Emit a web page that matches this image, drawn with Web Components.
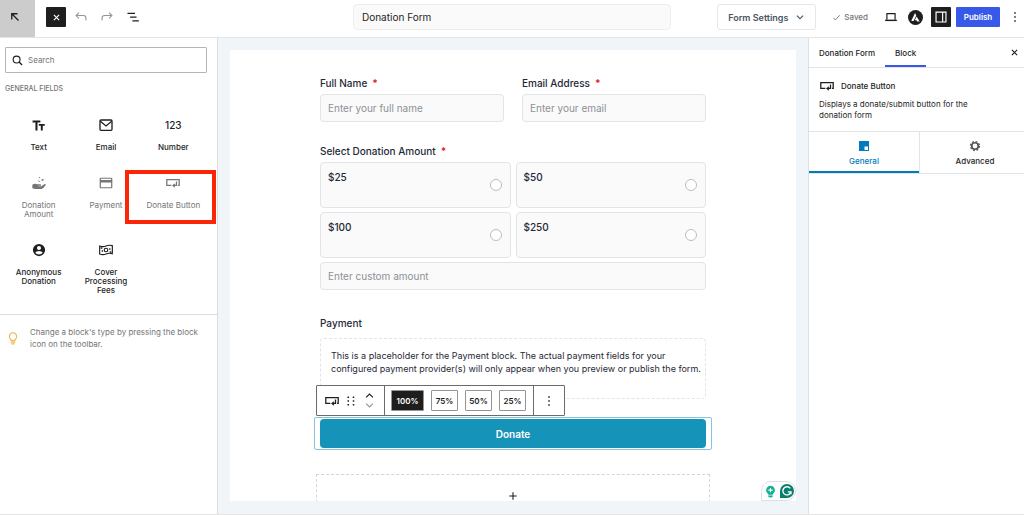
<!DOCTYPE html>
<html lang="en">
<head>
<meta charset="utf-8">
<meta name="viewport" content="width=device-width, initial-scale=1">
<title>Donation Form</title>
<style>
html, body { margin: 0; height: 100%; }
body { font-family: Inter, "Liberation Sans", sans-serif; color: #1e1e1e; background: #fff; }
</style>
</head>
<body>
<form-editor></form-editor>
<script>
const base = `*, *::before, *::after { box-sizing: border-box; }
button, input { font: inherit; color: inherit; margin: 0; }
button { background: none; border: 0; padding: 0; display: flex; align-items: center; justify-content: center; }
svg { display: block; }
h2, p { margin: 0; }`;

function define(name, css, html) {
  const tpl = document.createElement('template');
  tpl.innerHTML = `<style>${base}${css}</style>${html}`;
  customElements.define(name, class extends HTMLElement {
    constructor() {
      super();
      this.attachShadow({ mode: 'open' }).append(tpl.content.cloneNode(true));
    }
    connectedCallback() {
      const input = this.shadowRoot.querySelector('input[data-hint]');
      if (input) input.placeholder = this.getAttribute('hint') || '';
    }
  });
}

/* Icon set, all drawn on a 24 unit grid */
const line = (d, w = 1.5) => `<path d="${d}" fill="none" stroke="currentColor" stroke-width="${w}"/>`;
const icons = {
  back: line('M5.5 17V5.5H17M6 6l13 13', 2.6),
  close: line('M5 5l14 14M19 5L5 19', 3),
  undo: line('M8.5 4.5L3.5 9.5l5 5M4 9.5h12q4.500 0 4.500 4.500v4', 1.8),
  redo: line('M15.500 4.500l5 5-5 5M20 9.500H8q-4.500 0-4.500 4.500v4', 1.8),
  outline: '<path fill="currentColor" d="M2.500 4.500h13v2.200h-13zM7 11h11v2.200H7zM11 17.500h11v2.200H11z"/>',
  chevron: line('M4.500 8.500l7.500 7.500 7.500-7.500', 2.6),
  up: line('M3 17l9-9 9 9', 3),
  down: line('M3 7l9 9 9-9', 3),
  check: line('M3.500 13l5.500 5.500L20.500 6', 2.4),
  laptop: line('M5 16.500V6.200h14v10.300', 2) + '<path fill="currentColor" d="M2 16.500h20v2.500H2z"/>',
  astra: '<circle cx="12" cy="12" r="12" fill="currentColor"/><path fill="#fff" d="M11.300 4.800l1.900 3.800-4.300 9H5.200zM13.800 10.200l4.800 8.300h-3.900l-1-2.100h-2.900z"/>',
  panel: line('M3.500 3.500h17v17h-17zM14.800 3.500v17', 2),
  dots: '<g fill="currentColor"><rect x="10.500" y="2.500" width="3" height="3"/><rect x="10.500" y="10.500" width="3" height="3"/><rect x="10.500" y="18.500" width="3" height="3"/></g>',
  search: '<circle cx="10" cy="10" r="7.500" fill="none" stroke="currentColor" stroke-width="2.500"/>' + line('M15.500 15.500l6.500 6.500', 3),
  text: '<path fill="currentColor" d="M2.500 4h12.500v3.200h-4.600V20H7.100V7.200H2.500zM12.500 9.500h9.500v2.900h-3.200V20h-3.100v-7.600h-3.200z"/>',
  mail: '<rect x="3" y="4.500" width="18" height="15.500" rx="1.500" fill="none" stroke="currentColor" stroke-width="2"/>' + line('M3.500 6.500L12 13.500l8.500-7', 1.9),
  donation: '<path fill="currentColor" d="M2 14.500q4-2.500 7.500-.5h4.500q1.800.2 1 2h-4v.8h4.500l4.500-3q2-.7 2.300.8-3 5.300-6.800 6.400H6L2 20zM10.500 8q2.500 0 3.300 2.800-2.800-.2-3.300-2.800zM16 6.500q2.500-.8 3.300-.3-.5 2.600-3.300 3zM11.500 2.500q2.300.4 2.500 2.500-2.300-.3-2.500-2.500z"/>',
  card: '<path fill="currentColor" fill-rule="evenodd" d="M4 4h16q1.500 0 1.500 1.500v13q0 1.500-1.500 1.500H4q-1.500 0-1.500-1.500v-13Q2.500 4 4 4zm.3 1.800v1.800h15.400V5.800zm0 5.600v6.800h15.400v-6.800z"/>',
  donate: line('M9.500 15.500H2.700V7h18.600v8.500h-1.800', 1.9) + '<path fill="currentColor" d="M16.300 9.800h1.900v6.800h-3.400V19l-4.300-3.300 4.300-3.300v2.400h1.500z"/>',
  person: '<path fill="currentColor" fill-rule="evenodd" d="M12 1.500a10.500 10.500 0 1 0 0 21 10.500 10.500 0 0 0 0-21zm0 3.500a3.500 3.500 0 1 1 0 7 3.500 3.500 0 0 1 0-7zm0 8.800c2.500 0 5.600 1.200 6.300 2.900a8 8 0 0 1-12.600 0c.7-1.700 3.800-2.900 6.300-2.900z"/>',
  cash: line('M2.500 6q5 2 9.500 0t9.500-.5v12q-5-1.500-9.500.5t-9.500 0z', 1.7) + '<circle cx="12" cy="12" r="2.700" fill="none" stroke="currentColor" stroke-width="1.700"/><path fill="currentColor" d="M4 8h2.500v2H4zM17.500 14H20v2h-2.500zM5.500 12.500h2v2h-2zM16.700 9.500h2v2h-2z"/>',
  bulb: line('M8.700 16.500v-1.800a6.300 6.300 0 1 1 6.600 0v1.800zM8 19.200h8M9.500 22h5', 1.9),
  general: '<path fill="currentColor" fill-rule="evenodd" d="M2 2h20v20H2zm11 11v7h7v-7z"/>',
  gear: '<circle cx="12" cy="12" r="6.500" fill="none" stroke="currentColor" stroke-width="3.400"/><circle cx="12" cy="12" r="9" fill="none" stroke="currentColor" stroke-width="2.600" stroke-dasharray="3.600 3.470"/>',
  grip: '<g fill="currentColor"><path d="M5 3h3v3H5zM5 10.500h3v3H5zM5 18h3v3H5zM15.500 3h3v3h-3zM15.500 10.500h3v3h-3zM15.500 18h3v3h-3z"/></g>',
  plus: line('M12 3v18M3 12h18', 2.6),
  tip: '<circle cx="12" cy="9.500" r="8" fill="#15b094"/><path fill="#15b094" d="M8 15h8v3H8zM7.500 19.500h9v1.200q-1.500 2.300-4.500 2.300t-4.500-2.300z"/><path d="M12 5.500v8M8 9.500h8" stroke="#fff" stroke-width="2"/>',
  grammar: '<path fill="#0b7f6d" d="M12 0a12 12 0 1 1 0 24H0V12A12 12 0 0 1 12 0z"/><path d="M17.500 7.500a7 7 0 1 0 1.200 6H13.500M18.800 13v4.500" fill="none" stroke="#fff" stroke-width="2.300"/>'
};
customElements.define('ui-icon', class extends HTMLElement {
  constructor() { super(); this.attachShadow({ mode: 'open' }); }
  connectedCallback() {
    const size = this.getAttribute('size') || 16;
    this.shadowRoot.innerHTML = `<style>:host{display:block;flex:none}svg{display:block}</style>
      <svg width="${size}" height="${size}" viewBox="0 0 24 24" aria-hidden="true">${icons[this.getAttribute('name')]}</svg>`;
  }
});

define('editor-header', `
:host { display: flex; height: 38px; border-bottom: 1px solid #e4e4e4; background: #fff; }
.home { width: 35px; background: #ccc; padding: 0 5px 3px 0; }
.group { display: flex; align-items: center; padding-bottom: 3px; flex: 1; }
.left { padding-left: 11px; gap: 8px; }
.tools { display: flex; gap: 12px; }
.sq { width: 20px; height: 20px; background: #1e1e1e; color: #fff; border-radius: 1px; }
.tool { width: 14px; color: #949494; }
.tool.on { color: #1e1e1e; }
.title { flex: none; width: 318px; padding-bottom: 3px; display: flex; align-items: center; }
.title input { width: 100%; height: 26px; border: 1px solid #eee; border-radius: 4px; background: #fafafa; padding: 0 8px; font-size: 10px; outline: 0; }
.side { flex: 1; display: flex; }
.right { justify-content: flex-end; padding-right: 3px; }
.settings { height: 26px; width: 99px; border: 1px solid #e5e7eb; border-radius: 3px; color: #4b5563; font-size: 9px; font-weight: 600; gap: 7px; margin-right: 16px; }
.saved { display: flex; align-items: center; gap: 3px; color: #757575; font-size: 8px; font-weight: 500; margin-right: 16px; }
.publish { height: 20px; width: 44px; border-radius: 1px; background: #3858e9; color: #fff; font-size: 8px; font-weight: 600; margin: 0 9px 0 5px; }
.astra { margin: 0 8px 0 10px; }
`, `
<div class="side"><button class="home" aria-label="Back"><ui-icon name="back" size="12"></ui-icon></button>
<div class="group left">
  <button class="sq" aria-label="Close inserter"><ui-icon name="close" size="9"></ui-icon></button>
  <div class="tools">
    <button class="tool" aria-label="Undo"><ui-icon name="undo" size="14"></ui-icon></button>
    <button class="tool" aria-label="Redo"><ui-icon name="redo" size="14"></ui-icon></button>
    <button class="tool on" aria-label="Document overview"><ui-icon name="outline" size="14"></ui-icon></button>
  </div>
</div></div>
<div class="title"><input type="text" value="Donation Form" aria-label="Form title"></div>
<div class="side"><div class="group right">
  <button class="settings">Form Settings<ui-icon name="chevron" size="10"></ui-icon></button>
  <span class="saved"><ui-icon name="check" size="9"></ui-icon>Saved</span>
  <button aria-label="Preview"><ui-icon name="laptop" size="14"></ui-icon></button>
  <button class="astra" aria-label="Astra"><ui-icon name="astra" size="15"></ui-icon></button>
  <button class="sq" aria-label="Settings"><ui-icon name="panel" size="14"></ui-icon></button>
  <button class="publish">Publish</button>
  <button aria-label="Options"><ui-icon name="dots" size="12"></ui-icon></button>
</div></div>`);

define('block-tile', `
:host { display: block; position: relative; }
button { width: 100%; flex-direction: column; gap: 10px; font-size: 8px; line-height: 9px; font-weight: 500; }
:host([used]) button { color: #757575; font-weight: 400; }
.icon { display: flex; align-items: center; height: 16px; font-size: 10px; font-weight: 500; }
:host([marked])::after { content: ""; position: absolute; inset: -5px -9px auto -15px; height: 54px; border: 4px solid #fb2507; box-sizing: border-box; }
`, `<button><span class="icon"><slot name="icon"></slot></span><span><slot></slot></span></button>`);

define('block-inserter', `
:host { display: flex; flex-direction: column; border-right: 1px solid #ddd; background: #fff; }
.search { display: flex; align-items: center; gap: 5px; margin: 9px 10px 0 5px; height: 26px; border: 1px solid #b5b5b5; border-radius: 1px; padding: 0 6px; }
input { flex: 1; min-width: 0; border: 0; outline: 0; padding: 0; background: none; font-size: 8px; }
input::placeholder { color: #757575; opacity: 1; }
h2 { font-size: 7px; line-height: 10px; font-weight: 500; color: #757575; margin: 11px 5px 0; text-transform: uppercase; }
.grid { display: grid; grid-template-columns: repeat(3, 1fr); row-gap: 23px; padding: 23px 10px 19px 5px; border-bottom: 1px solid #ddd; }
.tip { display: flex; align-items: center; gap: 10px; padding: 11px 10px 0 6px; color: #757575; font-size: 8px; line-height: 12px; }
.tip ui-icon { color: #e9b949; }
`, `
<label class="search"><ui-icon name="search" size="11"></ui-icon><input type="text" placeholder="Search" aria-label="Search"></label>
<h2>General fields</h2>
<div class="grid">
  <block-tile><ui-icon slot="icon" name="text" size="15"></ui-icon>Text</block-tile>
  <block-tile><ui-icon slot="icon" name="mail" size="16"></ui-icon>Email</block-tile>
  <block-tile><span slot="icon">123</span>Number</block-tile>
  <block-tile used><ui-icon slot="icon" name="donation" size="16"></ui-icon>Donation<br>Amount</block-tile>
  <block-tile used><ui-icon slot="icon" name="card" size="16"></ui-icon>Payment</block-tile>
  <block-tile used marked><ui-icon slot="icon" name="donate" size="16"></ui-icon>Donate Button</block-tile>
  <block-tile><ui-icon slot="icon" name="person" size="14"></ui-icon>Anonymous<br>Donation</block-tile>
  <block-tile><ui-icon slot="icon" name="cash" size="16"></ui-icon>Cover<br>Processing<br>Fees</block-tile>
</div>
<div class="tip"><ui-icon name="bulb" size="14"></ui-icon><p>Change a block's type by pressing the block icon on the toolbar.</p></div>`);

const fieldCss = `
.label { display: block; font-size: 10px; line-height: 16px; font-weight: 500; color: #1f2937; }
.label b { color: #dc2626; margin-left: 5px; }
.box { display: block; width: 100%; height: 28px; border: 1px solid #e2e4e7; border-radius: 4px; background: #fafafa; padding: 0 7px; font-size: 10px; outline: 0; }
.box::placeholder { color: #8c9096; opacity: 1; }`;

define('text-field', fieldCss + `
:host { display: block; }
.label { margin-bottom: 3px; }
`, `<label class="label" for="control"><slot></slot><b>*</b></label><input class="box" id="control" type="text" data-hint>`);

define('amount-field', fieldCss + `
:host { display: block; }
fieldset { border: 0; margin: 0; padding: 0; min-width: 0; }
legend { padding: 0 0 3px; }
.options { display: grid; grid-template-columns: 1fr 1fr; gap: 4px 5px; margin-bottom: 4px; }
.option { display: flex; justify-content: space-between; height: 46px; border: 1px solid #e2e4e7; border-radius: 4px; background: #fafafa; padding: 7px 8px 0 7px; font-size: 10px; line-height: 14px; font-weight: 500; color: #1f2937; }
.option input { appearance: none; width: 12px; height: 12px; border: 1px solid #b9bdc4; border-radius: 50%; background: #fff; margin-top: 9px; }
`, `
<fieldset><legend class="label">Select Donation Amount<b>*</b></legend>
<div class="options">
  <label class="option">$25<input type="radio" name="amount"></label>
  <label class="option">$50<input type="radio" name="amount"></label>
  <label class="option">$100<input type="radio" name="amount"></label>
  <label class="option">$250<input type="radio" name="amount"></label>
</div>
<input class="box" type="text" placeholder="Enter custom amount" aria-label="Custom amount"></fieldset>`);

define('block-toolbar', `
:host { display: flex; height: 31px; border: 1px solid #6b6b6b; border-radius: 1px; background: #fff; }
.part { display: flex; align-items: center; padding: 0 7px; gap: 7px; }
.part + .part { border-left: 1px solid #6b6b6b; }
.block { gap: 5px; padding-right: 10px; }
.widths { padding-left: 6px; }
.widths button { height: 21px; width: 27px; border: 1px solid #949494; border-radius: 1px; font-size: 8px; font-weight: 600; }
.widths .on { width: 33px; background: #1e1e1e; color: #fff; }
.movers { display: flex; flex-direction: column; gap: 1px; margin-left: 3px; }
.movers button:last-child { color: #949494; }
.more { padding: 0 9px; }
`, `
<div class="part block">
  <button aria-label="Donate Button"><ui-icon name="donate" size="16"></ui-icon></button>
  <button aria-label="Drag"><ui-icon name="grip" size="12"></ui-icon></button>
  <span class="movers"><button aria-label="Move up"><ui-icon name="up" size="9"></ui-icon></button><button aria-label="Move down"><ui-icon name="down" size="9"></ui-icon></button></span>
</div>
<div class="part widths"><button class="on">100%</button><button>75%</button><button>50%</button><button>25%</button></div>
<div class="part more"><button aria-label="Options"><ui-icon name="dots" size="12"></ui-icon></button></div>`);

define('form-canvas', fieldCss + `
:host { display: flex; background: #f0f5fa; padding: 12px 12px 13px; min-width: 0; min-height: 0; }
.page { position: relative; flex: 1; min-width: 0; background: #fff; overflow: hidden; }
.form { max-width: 386px; margin: 0 auto; padding-top: 25px; }
.row { display: grid; grid-template-columns: 1fr 1fr; gap: 18px; margin-bottom: 21px; }
.payment { margin-top: 25px; }
.placeholder { margin-top: 7px; height: 61px; border: 1px dashed #e2e4e7; border-radius: 4px; padding: 10px 0 0 10px; font-size: 9px; line-height: 13px; color: #1f2937; }
.selected { position: relative; margin: 18px -6px 0; padding: 1px 5px; border: 1px solid #86c5d8; border-radius: 2px; }
.donate { width: 100%; height: 29px; border-radius: 4px; background: #1593b8; color: #fff; font-size: 10px; font-weight: 600; }
block-toolbar { position: absolute; left: 1px; bottom: 100%; margin-bottom: 2px; }
.append { margin: 24px -4px 0; width: calc(100% + 8px); height: 44px; border: 1px dashed #d4d4d4; border-radius: 1px; color: #1e1e1e; }
.badge { position: absolute; right: 0; bottom: 0; display: flex; align-items: center; gap: 3px; height: 20px; padding: 0 1px 0 2px; background: #fff; border: 1px solid #dcdfe4; border-radius: 10px 10px 10px 0; }
`, `
<div class="page">
  <div class="form">
    <div class="row">
      <text-field hint="Enter your full name">Full Name</text-field>
      <text-field hint="Enter your email">Email Address</text-field>
    </div>
    <amount-field></amount-field>
    <div class="payment"><span class="label">Payment</span>
      <p class="placeholder">This is a placeholder for the Payment block. The actual payment fields for your configured payment provider(s) will only appear when you preview or publish the form.</p>
    </div>
    <div class="selected"><block-toolbar></block-toolbar><button class="donate">Donate</button></div>
    <button class="append" aria-label="Add block"><ui-icon name="plus" size="10"></ui-icon></button>
  </div>
  <div class="badge"><ui-icon name="tip" size="13"></ui-icon><ui-icon name="grammar" size="14"></ui-icon></div>
</div>`);

define('block-settings', `
:host { display: flex; flex-direction: column; border-left: 1px solid #e0e0e0; background: #fff; font-size: 8px; }
.tabs { display: flex; height: 30px; border-bottom: 1px solid #e4e4e4; }
.tabs button { padding: 0 10px; font-weight: 500; }
.tabs .active { box-shadow: inset 0 -2px #3858e9; }
.tabs .x { margin-left: auto; padding: 0 5px; }
.info { padding: 11px 10px 10px; border-bottom: 1px solid #e4e4e4; line-height: 11px; }
.name { display: flex; align-items: center; gap: 6px; font-weight: 500; font-size: 8px; line-height: 14px; height: 14px; margin-bottom: 6px; }
.info p { max-width: 160px; }
.views { display: grid; grid-template-columns: 110px 1fr; height: 42px; border-bottom: 1px solid #e4e4e4; }
.views button { flex-direction: column; gap: 4px; font-weight: 500; }
.views .active { color: #007cba; box-shadow: inset 0 -2px #007cba; }
.views button + button { border-left: 1px solid #e4e4e4; padding-left: 6px; }
.gear { color: #555; }
`, `
<div class="tabs"><button>Donation Form</button><button class="active">Block</button><button class="x" aria-label="Close settings"><ui-icon name="close" size="9"></ui-icon></button></div>
<div class="info"><h2 class="name"><ui-icon name="donate" size="16"></ui-icon>Donate Button</h2>
<p>Displays a donate/submit button for the donation form</p></div>
<div class="views"><button class="active"><ui-icon name="general" size="12"></ui-icon>General</button><button><ui-icon class="gear" name="gear" size="12"></ui-icon>Advanced</button></div>`);

define('form-editor', `
:host { display: flex; flex-direction: column; height: 100vh; padding-bottom: 1px; }
main { flex: 1; min-height: 0; display: grid; grid-template-columns: 218px minmax(0, 1fr) 216px; grid-template-rows: minmax(0, 1fr); border-bottom: 1px solid #e4e4e4; }
`, `<editor-header></editor-header><main><block-inserter></block-inserter><form-canvas></form-canvas><block-settings></block-settings></main>`);
</script>
</body>
</html>
